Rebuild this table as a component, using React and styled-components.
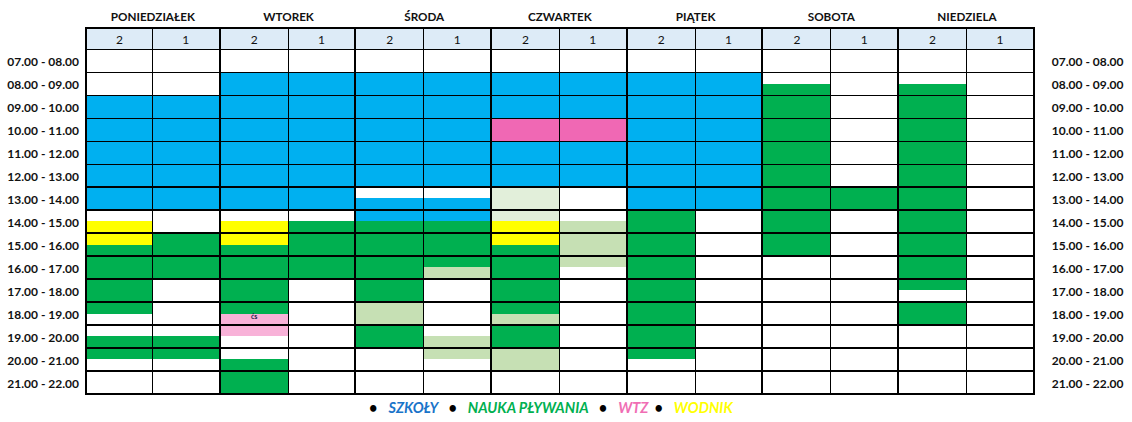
import React from "react";
import styled, { createGlobalStyle } from "styled-components";

const GlobalStyle = createGlobalStyle`
  html, body { margin: 0; padding: 0; background: #ffffff; }
  body { font-family: Lato, "Liberation Sans", sans-serif; color: #000000; }
`;

const COLORS = {
  W: "#ffffff",
  B: "#00b0f0",
  G: "#00b050",
  Y: "#ffff00",
  P: "#f068b4",
  p: "#f8b2d8",
  L: "#c6e0b4",
  l: "#e2efda",
};

const DAYS = ["PONIEDZIAŁEK", "WTOREK", "ŚRODA", "CZWARTEK", "PIĄTEK", "SOBOTA", "NIEDZIELA"];

const pad = (n) => String(n).padStart(2, "0");
const HOURS = Array.from({ length: 15 }, (_, i) => 7 + i);
const LABELS = HOURS.map((h) => `${pad(h)}.00 - ${pad(h + 1)}.00`);

// one string per sub-column, one token per hour (07..21); two letters = top half / bottom half
const COLUMNS = [
  "W W B B B B B WY YG G G GW WG GW W",
  "W W B B B B B W G G W W WG GW W",
  "W B B B B B B WY YG G G Gp pW WG G",
  "W B B B B B B WG G G W W W W W",
  "W B B B B B WB BG G G G L G W W",
  "W B B B B B WB BG G GL W W WL LW W",
  "W B B P B B l lY YG G G GL G L W",
  "W B B P B B W WL L LW W W W W W",
  "W B B B B B B G G G G G G GW W",
  "W B B B B B B W W W W W W W W",
  "W WG G G G G G G G W W W W W W",
  "W W W W W W G W W W W W W W W",
  "W WG G G G G G G G G GW G W W W",
  "W W W W W W W W W W W W W W W",
].map((s) => s.split(" "));

const fillOf = (code) =>
  code.length === 1
    ? COLORS[code]
    : `linear-gradient(to bottom, ${COLORS[code[0]]} 50%, ${COLORS[code[1]]} 50%)`;

const Page = styled.div`
  display: flex;
  flex-direction: column;
  width: 1132px;
`;

const Sheet = styled.div`
  display: grid;
  grid-template-columns: 85px repeat(14, 67.857px) 1fr;
  grid-template-rows: 27px repeat(16, 23px);
`;

const Blank = styled.div``;

const DayName = styled.div`
  grid-column: span 2;
  display: flex;
  align-items: flex-end;
  justify-content: center;
  padding-bottom: 4px;
  font-size: 11.7px;
  line-height: 14px;
  font-weight: 700;
  color: #111111;
`;

const SubHead = styled.div`
  box-sizing: border-box;
  display: flex;
  align-items: center;
  justify-content: center;
  background: #ddebf7;
  border-top: 2px solid #000;
  border-bottom: 1px solid #000;
  border-right: ${(p) => (p.$dayEnd ? 2 : 1)}px solid #000;
  border-left: ${(p) => (p.$first ? "2px solid #000" : "0")};
  font-size: 12px;
  color: #111111;
`;

const Cell = styled.div`
  box-sizing: border-box;
  display: flex;
  align-items: center;
  justify-content: center;
  background: ${(p) => p.$fill};
  border-bottom: ${(p) => (p.$thick ? 2 : 1)}px solid #000;
  border-right: ${(p) => (p.$dayEnd ? 2 : 1)}px solid #000;
  border-left: ${(p) => (p.$first ? "2px solid #000" : "0")};
`;

const Note = styled.span`
  margin-top: 6px;
  font-size: 7px;
  line-height: 7px;
  font-weight: 700;
  color: #1a1a4a;
`;

const TimeLabel = styled.div`
  display: flex;
  align-items: center;
  justify-content: ${(p) => (p.$right ? "flex-start" : "flex-end")};
  padding: ${(p) => (p.$right ? "0 0 0 17px" : "0 6px 0 0")};
  font-size: 12px;
  font-weight: 700;
  white-space: nowrap;
  color: #111111;
`;

const Legend = styled.div`
  display: flex;
  align-items: baseline;
  margin-top: 3px;
  padding-left: 369px;
  font-size: 14.5px;
  line-height: 20px;
  font-weight: 700;
  font-style: italic;
`;

const Dot = styled.span`
  color: #000;
  font-style: normal;
  margin-right: 11px;
`;

const LegendLabel = styled.span`
  color: ${(p) => p.$color};
  margin-right: ${(p) => p.$gap}px;
`;

const LEGEND = [
  { text: "SZKOŁY", color: "#1a74c9", gap: 10 },
  { text: "NAUKA PŁYWANIA", color: "#00b050", gap: 10 },
  { text: "WTZ", color: "#f06eb4", gap: 6 },
  { text: "WODNIK", color: "#ffff00", gap: 0 },
];

export default function App() {
  return (
    <Page>
      <GlobalStyle />
      <Sheet>
        <Blank />
        {DAYS.map((d) => (
          <DayName key={d}>{d}</DayName>
        ))}
        <Blank />

        <Blank />
        {COLUMNS.map((_, c) => (
          <SubHead key={c} $first={c === 0} $dayEnd={c % 2 === 1}>
            {c % 2 === 0 ? "2" : "1"}
          </SubHead>
        ))}
        <Blank />

        {LABELS.map((label, r) => (
          <React.Fragment key={label}>
            <TimeLabel>{label}</TimeLabel>
            {COLUMNS.map((col, c) => (
              <Cell
                key={c}
                $fill={fillOf(col[r])}
                $thick={r >= 5}
                $first={c === 0}
                $dayEnd={c % 2 === 1}
              >
                {c === 2 && r === 11 ? <Note>ćs</Note> : null}
              </Cell>
            ))}
            <TimeLabel $right>{label}</TimeLabel>
          </React.Fragment>
        ))}
      </Sheet>
      <Legend>
        {LEGEND.map((item) => (
          <React.Fragment key={item.text}>
            <Dot>•</Dot>
            <LegendLabel $color={item.color} $gap={item.gap}>
              {item.text}
            </LegendLabel>
          </React.Fragment>
        ))}
      </Legend>
    </Page>
  );
}
